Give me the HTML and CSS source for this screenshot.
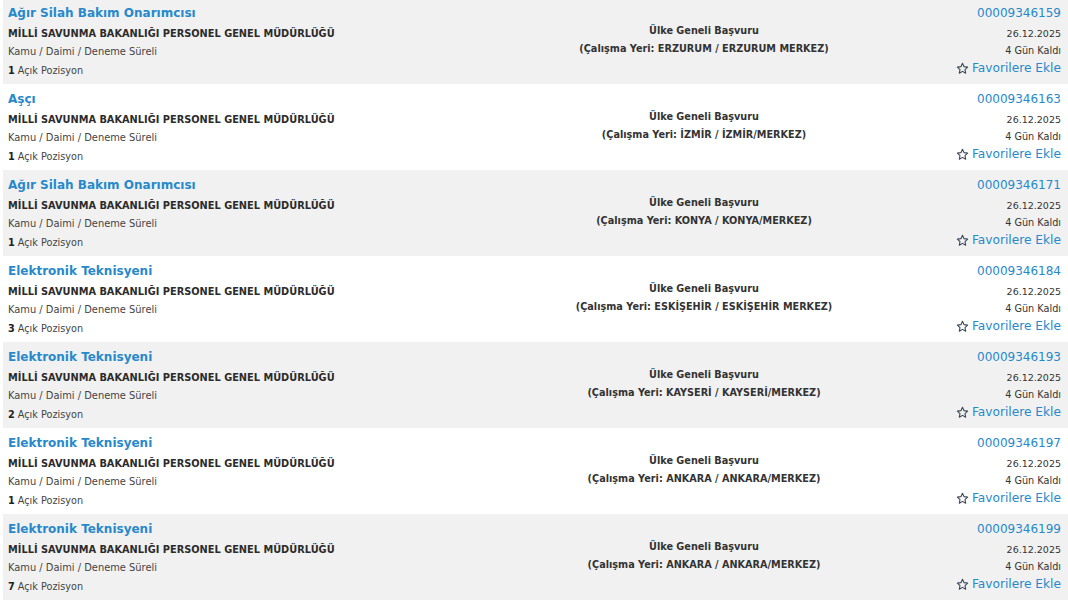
FILE: index.html
```html
<!DOCTYPE html>
<html lang="tr">
<head>
<meta charset="utf-8">
<title>İlanlar</title>
<link rel="stylesheet" href="styles.css">
</head>
<body>
<div class="list">
  <div class="row alt">
    <div class="left">
      <div class="title">Ağır Silah Bakım Onarımcısı</div>
      <div class="org">MİLLİ SAVUNMA BAKANLIĞI PERSONEL GENEL MÜDÜRLÜĞÜ</div>
      <div class="type">Kamu / Daimi / Deneme Süreli</div>
      <div class="pos"><b>1</b> Açık Pozisyon</div>
    </div>
    <div class="mid">
      <div>Ülke Geneli Başvuru</div>
      <div>(Çalışma Yeri: ERZURUM / ERZURUM MERKEZ)</div>
    </div>
    <div class="right">
      <div class="num">00009346159</div>
      <div class="date">26.12.2025</div>
      <div class="days">4 Gün Kaldı</div>
      <div class="fav"><svg class="star" viewBox="0 0 24 24"><path d="M12 2.5l2.9 6.1 6.6.8-4.9 4.6 1.3 6.6L12 17.3l-5.9 3.3 1.3-6.6-4.9-4.6 6.6-.8z"/></svg>Favorilere Ekle</div>
    </div>
  </div>
  <div class="row">
    <div class="left">
      <div class="title">Aşçı</div>
      <div class="org">MİLLİ SAVUNMA BAKANLIĞI PERSONEL GENEL MÜDÜRLÜĞÜ</div>
      <div class="type">Kamu / Daimi / Deneme Süreli</div>
      <div class="pos"><b>1</b> Açık Pozisyon</div>
    </div>
    <div class="mid">
      <div>Ülke Geneli Başvuru</div>
      <div>(Çalışma Yeri: İZMİR / İZMİR/MERKEZ)</div>
    </div>
    <div class="right">
      <div class="num">00009346163</div>
      <div class="date">26.12.2025</div>
      <div class="days">4 Gün Kaldı</div>
      <div class="fav"><svg class="star" viewBox="0 0 24 24"><path d="M12 2.5l2.9 6.1 6.6.8-4.9 4.6 1.3 6.6L12 17.3l-5.9 3.3 1.3-6.6-4.9-4.6 6.6-.8z"/></svg>Favorilere Ekle</div>
    </div>
  </div>
  <div class="row alt">
    <div class="left">
      <div class="title">Ağır Silah Bakım Onarımcısı</div>
      <div class="org">MİLLİ SAVUNMA BAKANLIĞI PERSONEL GENEL MÜDÜRLÜĞÜ</div>
      <div class="type">Kamu / Daimi / Deneme Süreli</div>
      <div class="pos"><b>1</b> Açık Pozisyon</div>
    </div>
    <div class="mid">
      <div>Ülke Geneli Başvuru</div>
      <div>(Çalışma Yeri: KONYA / KONYA/MERKEZ)</div>
    </div>
    <div class="right">
      <div class="num">00009346171</div>
      <div class="date">26.12.2025</div>
      <div class="days">4 Gün Kaldı</div>
      <div class="fav"><svg class="star" viewBox="0 0 24 24"><path d="M12 2.5l2.9 6.1 6.6.8-4.9 4.6 1.3 6.6L12 17.3l-5.9 3.3 1.3-6.6-4.9-4.6 6.6-.8z"/></svg>Favorilere Ekle</div>
    </div>
  </div>
  <div class="row">
    <div class="left">
      <div class="title">Elektronik Teknisyeni</div>
      <div class="org">MİLLİ SAVUNMA BAKANLIĞI PERSONEL GENEL MÜDÜRLÜĞÜ</div>
      <div class="type">Kamu / Daimi / Deneme Süreli</div>
      <div class="pos"><b>3</b> Açık Pozisyon</div>
    </div>
    <div class="mid">
      <div>Ülke Geneli Başvuru</div>
      <div>(Çalışma Yeri: ESKİŞEHİR / ESKİŞEHİR MERKEZ)</div>
    </div>
    <div class="right">
      <div class="num">00009346184</div>
      <div class="date">26.12.2025</div>
      <div class="days">4 Gün Kaldı</div>
      <div class="fav"><svg class="star" viewBox="0 0 24 24"><path d="M12 2.5l2.9 6.1 6.6.8-4.9 4.6 1.3 6.6L12 17.3l-5.9 3.3 1.3-6.6-4.9-4.6 6.6-.8z"/></svg>Favorilere Ekle</div>
    </div>
  </div>
  <div class="row alt">
    <div class="left">
      <div class="title">Elektronik Teknisyeni</div>
      <div class="org">MİLLİ SAVUNMA BAKANLIĞI PERSONEL GENEL MÜDÜRLÜĞÜ</div>
      <div class="type">Kamu / Daimi / Deneme Süreli</div>
      <div class="pos"><b>2</b> Açık Pozisyon</div>
    </div>
    <div class="mid">
      <div>Ülke Geneli Başvuru</div>
      <div>(Çalışma Yeri: KAYSERİ / KAYSERİ/MERKEZ)</div>
    </div>
    <div class="right">
      <div class="num">00009346193</div>
      <div class="date">26.12.2025</div>
      <div class="days">4 Gün Kaldı</div>
      <div class="fav"><svg class="star" viewBox="0 0 24 24"><path d="M12 2.5l2.9 6.1 6.6.8-4.9 4.6 1.3 6.6L12 17.3l-5.9 3.3 1.3-6.6-4.9-4.6 6.6-.8z"/></svg>Favorilere Ekle</div>
    </div>
  </div>
  <div class="row">
    <div class="left">
      <div class="title">Elektronik Teknisyeni</div>
      <div class="org">MİLLİ SAVUNMA BAKANLIĞI PERSONEL GENEL MÜDÜRLÜĞÜ</div>
      <div class="type">Kamu / Daimi / Deneme Süreli</div>
      <div class="pos"><b>1</b> Açık Pozisyon</div>
    </div>
    <div class="mid">
      <div>Ülke Geneli Başvuru</div>
      <div>(Çalışma Yeri: ANKARA / ANKARA/MERKEZ)</div>
    </div>
    <div class="right">
      <div class="num">00009346197</div>
      <div class="date">26.12.2025</div>
      <div class="days">4 Gün Kaldı</div>
      <div class="fav"><svg class="star" viewBox="0 0 24 24"><path d="M12 2.5l2.9 6.1 6.6.8-4.9 4.6 1.3 6.6L12 17.3l-5.9 3.3 1.3-6.6-4.9-4.6 6.6-.8z"/></svg>Favorilere Ekle</div>
    </div>
  </div>
  <div class="row alt">
    <div class="left">
      <div class="title">Elektronik Teknisyeni</div>
      <div class="org">MİLLİ SAVUNMA BAKANLIĞI PERSONEL GENEL MÜDÜRLÜĞÜ</div>
      <div class="type">Kamu / Daimi / Deneme Süreli</div>
      <div class="pos"><b>7</b> Açık Pozisyon</div>
    </div>
    <div class="mid">
      <div>Ülke Geneli Başvuru</div>
      <div>(Çalışma Yeri: ANKARA / ANKARA/MERKEZ)</div>
    </div>
    <div class="right">
      <div class="num">00009346199</div>
      <div class="date">26.12.2025</div>
      <div class="days">4 Gün Kaldı</div>
      <div class="fav"><svg class="star" viewBox="0 0 24 24"><path d="M12 2.5l2.9 6.1 6.6.8-4.9 4.6 1.3 6.6L12 17.3l-5.9 3.3 1.3-6.6-4.9-4.6 6.6-.8z"/></svg>Favorilere Ekle</div>
    </div>
  </div>
</div>
</body>
</html>
```

FILE: styles.css
```css
html, body {
  margin: 0;
  padding: 0;
  background: #ffffff;
}

body {
  font-family: "DejaVu Sans", Verdana, sans-serif;
  color: #333333;
  overflow: hidden;
}

.list {
  margin-top: -2px;
  padding-left: 3px;
}

.row {
  display: grid;
  grid-template-columns: 437px 528px minmax(0, 1fr);
  height: 86px;
  background: #ffffff;
}

.row.alt {
  background: #f1f1f1;
}

.left {
  padding: 6px 0 0 5px;
}

.title {
  font-size: 12px;
  font-weight: bold;
  line-height: 18px;
  color: #2789cb;
  white-space: nowrap;
}

.org {
  margin-top: 3px;
  font-size: 9.8px;
  font-weight: bold;
  line-height: 18px;
  color: #2b2b2b;
  white-space: nowrap;
}

.type {
  font-size: 9.9px;
  line-height: 18px;
  color: #444444;
  white-space: nowrap;
}

.pos {
  font-size: 9.7px;
  line-height: 20px;
  color: #444444;
  white-space: nowrap;
}

.pos b {
  color: #222222;
}

.mid {
  padding-top: 24px;
  text-align: center;
  font-size: 9.7px;
  font-weight: bold;
  line-height: 18px;
  color: #333333;
  white-space: nowrap;
}

.right {
  padding: 6px 7px 0 0;
  display: flex;
  flex-direction: column;
  align-items: flex-end;
  white-space: nowrap;
  min-width: 0;
}

.num {
  font-size: 12px;
  line-height: 18px;
  color: #2789cb;
}

.date {
  margin-top: 3px;
  font-size: 9.5px;
  line-height: 18px;
  color: #333333;
}

.days {
  font-size: 9.7px;
  line-height: 16px;
  color: #333333;
}

.fav {
  font-size: 12.2px;
  line-height: 18px;
  color: #2789cb;
  display: flex;
  align-items: center;
  gap: 3px;
}

.star {
  width: 13px;
  height: 13px;
  fill: none;
  stroke: #3b4656;
  stroke-width: 2;
  stroke-linejoin: round;
}
```
